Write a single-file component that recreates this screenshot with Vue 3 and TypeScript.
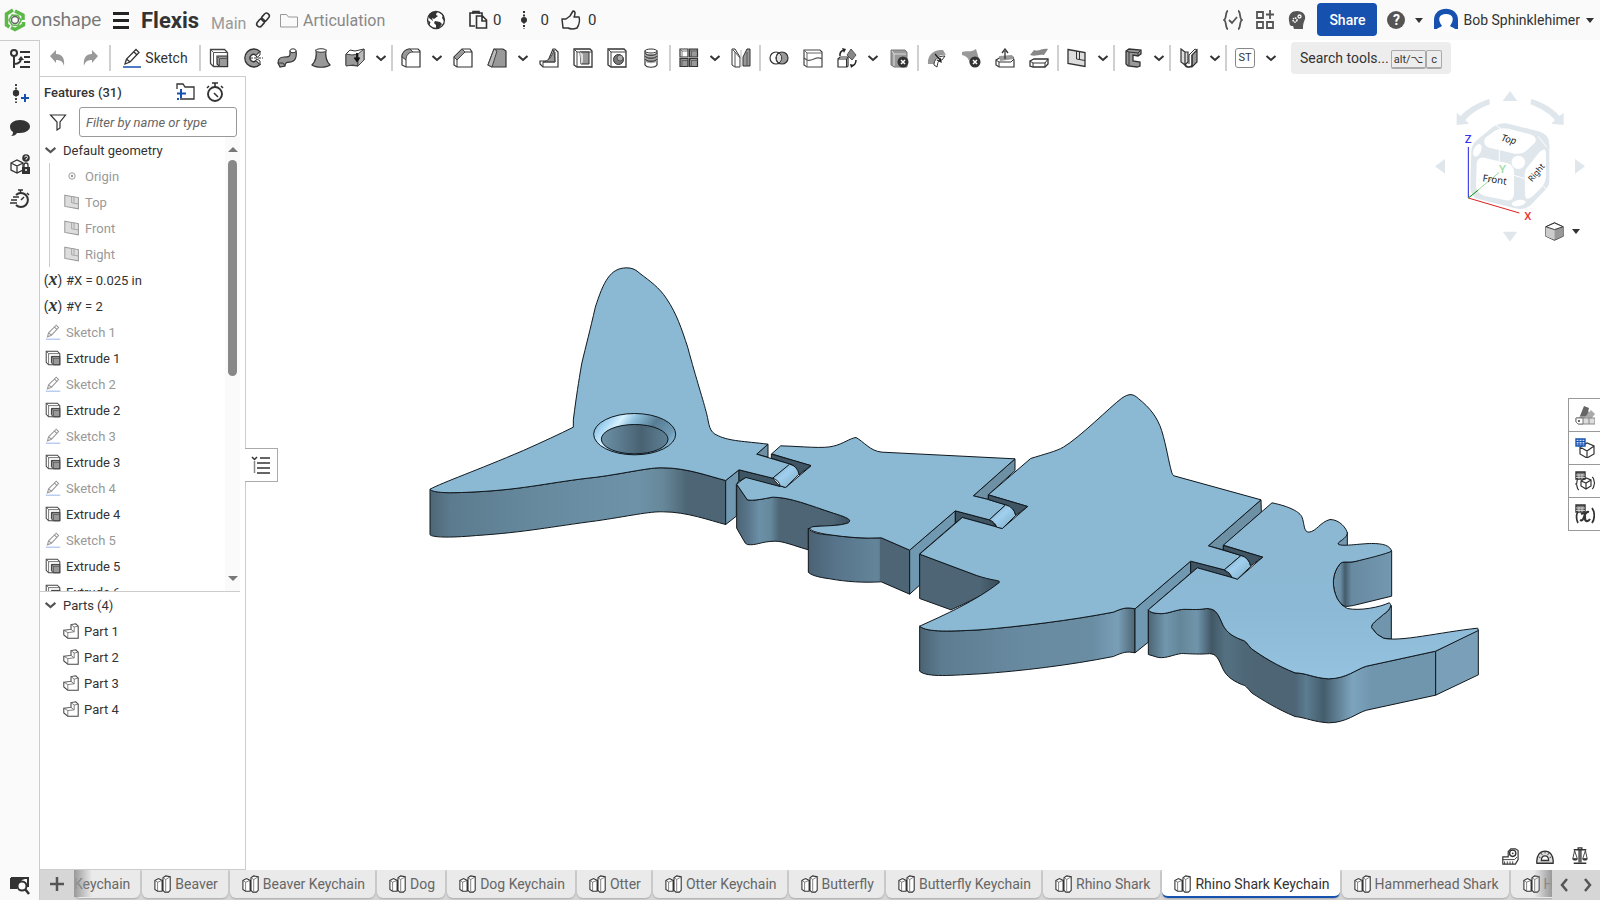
<script setup lang="ts">
import { ref } from 'vue'

interface Tool {
  icon: string
  label: string
  menu?: boolean
}

interface Feature {
  icon: string
  name: string
  muted?: boolean
}

const toolGroups: Tool[][] = [
  [
    { icon: 'extrude', label: 'Extrude' },
    { icon: 'revolve', label: 'Revolve' },
    { icon: 'sweep', label: 'Sweep' },
    { icon: 'loft', label: 'Loft' },
    { icon: 'thicken', label: 'Thicken', menu: true },
  ],
  [
    { icon: 'fillet', label: 'Fillet', menu: true },
    { icon: 'chamfer', label: 'Chamfer' },
    { icon: 'draft', label: 'Draft', menu: true },
    { icon: 'rib', label: 'Rib' },
    { icon: 'shell', label: 'Shell' },
    { icon: 'hole', label: 'Hole' },
    { icon: 'thread', label: 'External thread' },
  ],
  [
    { icon: 'pattern', label: 'Linear pattern', menu: true },
    { icon: 'mirror', label: 'Mirror' },
  ],
  [
    { icon: 'boolean', label: 'Boolean' },
    { icon: 'split', label: 'Split' },
    { icon: 'transform', label: 'Transform', menu: true },
    { icon: 'delete-part', label: 'Delete part' },
  ],
  [
    { icon: 'modify-fillet', label: 'Modify fillet' },
    { icon: 'delete-face', label: 'Delete face' },
    { icon: 'move-face', label: 'Move face' },
    { icon: 'replace-face', label: 'Replace face' },
  ],
  [{ icon: 'plane', label: 'Plane', menu: true }],
  [{ icon: 'frame', label: 'Frame', menu: true }],
  [{ icon: 'sheet', label: 'Sheet metal', menu: true }],
]

const geometry: Feature[] = [
  { icon: 'origin', name: 'Origin' },
  { icon: 'plane', name: 'Top' },
  { icon: 'plane', name: 'Front' },
  { icon: 'plane', name: 'Right' },
]

const features: Feature[] = [
  { icon: 'variable', name: '#X = 0.025 in' },
  { icon: 'variable', name: '#Y = 2' },
]
for (let n = 1; n <= 5; n++) {
  features.push({ icon: 'sketch', name: `Sketch ${n}`, muted: true })
  features.push({ icon: 'extrude', name: `Extrude ${n}` })
}
features.push({ icon: 'extrude', name: 'Extrude 6' })

const parts = ['Part 1', 'Part 2', 'Part 3', 'Part 4']
const tabs = [
  'Beaver', 'Beaver Keychain', 'Dog', 'Dog Keychain', 'Otter', 'Otter Keychain',
  'Butterfly', 'Butterfly Keychain', 'Rhino Shark', 'Rhino Shark Keychain',
  'Hammerhead Shark', 'Hammerhead Shark Keychain',
]
const activeTab = ref('Rhino Shark Keychain')
const filterText = ref('')
const rail = [
  { icon: 'tree', label: 'Feature list' },
  { icon: 'version', label: 'Versions and history' },
  { icon: 'comment', label: 'Comments' },
  { icon: 'learn', label: 'Configurations' },
  { icon: 'speed', label: 'Performance' },
]
const sideTools = [
  { icon: 'appearance', label: 'Appearances' },
  { icon: 'config-table', label: 'Configuration table' },
  { icon: 'custom-table', label: 'Custom tables' },
  { icon: 'variable-table', label: 'Variable table' },
]
const measureTools = [
  { icon: 'tape', label: 'Measure' },
  { icon: 'protractor', label: 'Analysis' },
  { icon: 'scales', label: 'Mass properties' },
]
</script>

<template>
  <div class="app">
    <svg class="defs" aria-hidden="true">
      <symbol id="i-extrude" viewBox="0 0 20 20"><path d="M1.500 1.500h14l3 3v14h-14l-3-3z" fill="#fff" stroke="#444" stroke-width="1.300" /><path d="M1.500 1.500l3 3h14M4.500 4.500v14" fill="none" stroke="#555" /><path d="M8 8h10.500v10.500h-8L8 16z" fill="#999" stroke="#333" stroke-width="1.200" /><path d="M8 8l2.500 2.500h8M10.500 10.500v8" fill="none" stroke="#555" /></symbol>
      <symbol id="i-revolve" viewBox="0 0 20 20"><path d="M17 3.500A9 9 0 1 0 17 16.500L13 12.500a3.500 3.500 0 1 1 0-5z" fill="#999" stroke="#333" stroke-width="1.300" /><path d="M17 3.500v3.500l-3 2.500-1-2zM17 16.500V13l-3-2-1 1.500z" fill="#fff" stroke="#333" /><path d="M7 10h13" stroke="#333" stroke-dasharray="3 1" /></symbol>
      <symbol id="i-sweep" viewBox="0 0 20 20"><path d="M1 15c0-4 2-6 6-6s6 0 6-3V3h6c1 6-1 10-5 11-4 .5-6 0-6 4l-5 1z" fill="#999" stroke="#333" stroke-width="1.200" /><ellipse cx="16" cy="2.800" rx="3" ry="2" fill="#fff" stroke="#333" /><path d="M1 15l5 0 2 3" fill="none" stroke="#333" /></symbol>
      <symbol id="i-loft" viewBox="0 0 20 20"><path d="M5 2C6 9 4 14 1 17c4 3 14 3 18 0-3-3-5-8-4-15z" fill="#999" stroke="#333" stroke-width="1.200" /><ellipse cx="10" cy="2.500" rx="5" ry="1.800" fill="#fff" stroke="#333" /></symbol>
      <symbol id="i-thicken" viewBox="0 0 20 20"><path d="M1 6l4-4 5 1 9-2v11l-6 6-12-1z" fill="#fff" stroke="#333" /><path d="M1 6l6 1 6-1v12l-5-1-7 1z" fill="#999" stroke="#444" /><path d="M13 6l6-5v11l-6 6z" fill="#bbb" stroke="#444" /><path d="M12 5v7M9.500 9.500L12 13l2.500-3.500" stroke="#111" stroke-width="1.800" fill="none" /></symbol>
      <symbol id="i-fillet" viewBox="0 0 20 20"><path d="M1 17V9C1 4 5 1 9 1h8l2 2v16H5z" fill="#fff" stroke="#333" stroke-width="1.200" /><path d="M1 9C1 4 5 1 9 1l3 3C8 4 5 7 5 12z" fill="#999" stroke="#444" /><path d="M5 12v7M12 4h7" stroke="#333" /></symbol>
      <symbol id="i-chamfer" viewBox="0 0 20 20"><path d="M1 17V9l8-8h8l2 3v15H4z" fill="#fff" stroke="#333" stroke-width="1.200" /><path d="M1 9l8-8 3 3-8 8z" fill="#999" stroke="#444" /><path d="M4 12v7M12 4h7" stroke="#333" /></symbol>
      <symbol id="i-draft" viewBox="0 0 20 20"><path d="M1 17L7 1h9l3 2v16H5z" fill="#999" stroke="#333" stroke-width="1.200" /><path d="M7 1l3 2-5 16-4-2z" fill="#bbb" stroke="#444" /></symbol>
      <symbol id="i-rib" viewBox="0 0 20 20"><path d="M1 13h8l5-12h2l3 3v15H4l-3-3z" fill="#fff" stroke="#333" stroke-width="1.200" /><path d="M4 14c5-1 9-5 11-12l1 12z" fill="#999" stroke="#444" /><path d="M16 4v10H4v5" fill="none" stroke="#444" /></symbol>
      <symbol id="i-shell" viewBox="0 0 20 20"><path d="M1 1h16l2 2v16H4l-3-2z" fill="#fff" stroke="#333" stroke-width="1.300" /><path d="M1 1l3 3h15M4 4v15" fill="none" stroke="#444" /><path d="M7 4h9v12H8z" fill="#999" stroke="#333" /><path d="M7 4l3 2v8l-2 2z" fill="#ddd" /></symbol>
      <symbol id="i-hole" viewBox="0 0 20 20"><path d="M1 1h16l2 2v16H4l-3-2z" fill="#fff" stroke="#333" stroke-width="1.300" /><path d="M1 1l3 3h15M4 4v15" fill="none" stroke="#444" /><circle cx="11.500" cy="11.500" r="5" fill="#777" stroke="#333" /><circle cx="13" cy="10" r="3" fill="#aaa" stroke="#555" /></symbol>
      <symbol id="i-thread" viewBox="0 0 20 20"><path d="M4 3v14c2 3 10 3 12 0V3z" fill="#fff" stroke="#333" stroke-width="1.200" /><path d="M4 5v8c2 3 10 3 12 0V5c-2 2-10 2-12 0z" fill="#aaa" /><path d="M4 5c2 3 10 3 12 0M4 8c2 3 10 3 12 0M4 11c2 3 10 3 12 0" fill="none" stroke="#444" stroke-width="1.300" /><ellipse cx="10" cy="3" rx="6" ry="2" fill="#fff" stroke="#333" /></symbol>
      <symbol id="i-pattern" viewBox="0 0 20 20"><g stroke="#333" stroke-width="1.200"><path d="M1 1h8v8H1z" fill="#fff" /><path d="M10.500 1h8v8h-8zM1 10.500h8v8H1zM10.500 10.500h8v8h-8z" fill="#999" /><path d="M1 10.500l2 2h6M3 12.500v6M10.500 10.500l2 2h6M12.500 12.500v6M10.500 1l2 2h6M12.500 3v6M1 1l2 2h6M3 3v6" fill="none" stroke="#555" stroke-width=".8" /></g></symbol>
      <symbol id="i-mirror" viewBox="0 0 20 20"><path d="M1 1h3l5 8v10H4l-3-2z" fill="#fff" stroke="#333" /><path d="M4 4v15M1 1l3 3 5 6" fill="none" stroke="#555" /><path d="M16 1h3v17h-7V9z" fill="#999" stroke="#333" /><path d="M16 4v14" stroke="#555" /><path d="M10 2v17" fill="none" stroke="#bbb" /></symbol>
      <symbol id="i-boolean" viewBox="0 0 20 20"><circle cx="7" cy="10" r="6" fill="#fff" stroke="#333" stroke-width="1.200" /><circle cx="13" cy="10" r="6" fill="#999" stroke="#333" stroke-width="1.200" /><path d="M10 5a6 6 0 0 1 0 10 6 6 0 0 1 0-10z" fill="#ddd" stroke="#333" /></symbol>
      <symbol id="i-split" viewBox="0 0 20 20"><path d="M1 2h16l2 2v15H4l-3-2z" fill="#fff" stroke="#444" stroke-width="1.200" /><path d="M1 2l3 3h15M4 5v14" fill="none" stroke="#666" /><path d="M1 10l3 2c6 2 9-5 15-1" fill="none" stroke="#555" stroke-width="1.300" /></symbol>
      <symbol id="i-transform" viewBox="0 0 20 20"><path d="M14 1l5 6-4 5-5-5z" fill="#888" stroke="#555" /><path d="M1 11l2-2h8v9l-1 1H1z" fill="#fff" stroke="#333" stroke-width="1.200" /><path d="M1 11h8.500v8M9.500 11L11 9" fill="none" stroke="#333" /><path d="M3 8c-.5-3 1-5 4-6M19 12c0 3-1 5-4 6" fill="none" stroke="#222" stroke-width="1.500" /><path d="M5 0l4 1-2 4zM13 16l1 4 3-3z" fill="#222" /></symbol>
      <symbol id="i-delete-part" viewBox="0 0 20 20"><path d="M2 2h14l2 2v15H5l-3-2z" fill="#999" stroke="#777" /><path d="M3 3l2 3h12M5 6v12" fill="none" stroke="#ddd" /><circle cx="14" cy="14" r="5.500" fill="#333" /><path d="M12 12l4 4m0-4l-4 4" stroke="#fff" stroke-width="1.500" /></symbol>
      <symbol id="i-modify-fillet" viewBox="0 0 20 20"><path d="M1 16C0 7 7 1 16 2l3 5c-6-1-10 2-12 9z" fill="#999" /><path d="M7 17c0-5 3-9 11-9l-3 4c-4 0-4 2-5 7z" fill="#fff" stroke="#333" /><path d="M8 6l6 7M10 12l4 2-1-4" stroke="#222" stroke-width="1.200" fill="none" /></symbol>
      <symbol id="i-delete-face" viewBox="0 0 20 20"><path d="M1 4c4-2 8 1 14-3l3 10c-4 0-6 2-9 5C8 11 6 8 1 7z" fill="#999" /><circle cx="14" cy="14" r="5.500" fill="#333" /><path d="M12 12l4 4m0-4l-4 4" stroke="#fff" stroke-width="1.500" /></symbol>
      <symbol id="i-move-face" viewBox="0 0 20 20"><path d="M1 12l5-3h12l1 3v7H4l-3-2z" fill="#fff" stroke="#333" stroke-width="1.200" /><path d="M4 8l13-1 2 4-14 2z" fill="#999" /><path d="M1 12l3 2h12l3-3M4 14v5" fill="none" stroke="#333" /><path d="M10 11V3M7 5l3-4 3 4" stroke="#333" stroke-width="1.300" fill="none" /></symbol>
      <symbol id="i-replace-face" viewBox="0 0 20 20"><path d="M5 2c5 2 8-2 14-1l-4 6C9 6 7 9 1 7z" fill="#888" /><path d="M1 13l4-2h14v5l-3 3H4l-3-1z" fill="#fff" stroke="#333" stroke-width="1.300" /><path d="M1 13l3 2h12l3-4M16 15v4M4 15v4" fill="none" stroke="#333" /></symbol>
      <symbol id="i-plane" viewBox="0 0 20 20"><path d="M1 1.500l17 3v14l-17-3z" fill="#ddd" stroke="currentColor" stroke-width="1.300" /><path d="M9.500 3v8l8.500 1.500M12.500 3.500v7.500" fill="none" stroke="currentColor" /></symbol>
      <symbol id="i-frame" viewBox="0 0 20 20"><path d="M3 3l3-2 12 1v4l-3 2-5-1v6l7 1v4l-3 1-9-1-2-2z" fill="#999" stroke="#333" stroke-width="1.300" /><path d="M3 3l3 1v14M6 4l9 1 3-3M15 5v3" fill="none" stroke="#333" /></symbol>
      <symbol id="i-sheet" viewBox="0 0 20 20"><path d="M2 1l4 3v13l-4-3zM6 4h3v10l-3 3" fill="#ddd" stroke="#333" stroke-width="1.200" /><path d="M6 17c1 3 6 3 7 0V7l5-5v12l-5 5H9z" fill="#999" stroke="#333" stroke-width="1.200" /><path d="M13 7v11l-4 1M10 7l6-6 2 1M10 7v9" fill="none" stroke="#333" /></symbol>
      <symbol id="i-sketch" viewBox="0 0 20 20"><path d="M3 16l1.500-5L14 1.500l3 3L8 14zM4.500 11L8 14M12 4l3 3" fill="none" stroke="currentColor" stroke-width="1.300" /><path d="M1 19h18" stroke="var(--line, #1651b0)" stroke-width="1.500" /></symbol>
      <symbol id="i-origin" viewBox="0 0 20 20"><circle cx="10" cy="10" r="4" fill="none" stroke="currentColor" stroke-width="1.200" /><circle cx="10" cy="10" r="1.500" fill="currentColor" /></symbol>
      <symbol id="i-part" viewBox="0 0 20 20"><path d="M1 9l9-1V2l6-1 3 3v15H6l-5-4z" fill="#fff" stroke="#444" stroke-width="1.300" /><path d="M1 9l5 3 8-1V5l-4-3M14 5l5-1M6 12v7M14 11l-4-3" fill="none" stroke="#666" /></symbol>
      <symbol id="i-tab" viewBox="0 0 20 20"><path d="M1 6l4-2 4 2v12H4l-3-2zM10 3l3-2 5 1v15l-2 2h-4l-2-2z" fill="#fff" stroke="#333" stroke-width="1.200" /><path d="M1 6l3 2 5-2M4 8v10M10 3l3 2 5-3M13 5v13" fill="none" stroke="#555" stroke-width=".8" /></symbol>
      <symbol id="i-chevron" viewBox="0 0 12 12"><path d="M1.500 4L6 8l4.500-4" fill="none" stroke="currentColor" stroke-width="2" /></symbol>
      <symbol id="i-undo" viewBox="0 0 20 20"><path d="M3 8l6-6v4c6 0 9 4 8 12-1-4-3-6-8-6v3z" fill="#999" /></symbol>
      <symbol id="i-tree" viewBox="0 0 20 20"><circle cx="4" cy="4" r="3" fill="none" stroke="#333" stroke-width="2" /><path d="M4 7v12M4 15c5 0 7-2 7-6" fill="none" stroke="#333" stroke-width="2" /><path d="M8 11l3-4 3 4z" fill="#333" /><path d="M10 3h10M14 8h6M14 13h6M10 18h10" stroke="#333" stroke-width="2" /></symbol>
      <symbol id="i-version" viewBox="0 0 20 20"><circle cx="6" cy="9" r="3.200" fill="#333" /><path d="M6 0v19" stroke="#333" stroke-width="1.800" stroke-dasharray="2 1.500" /><path d="M15 10v8M11 14h8" stroke="#1651b0" stroke-width="2" /></symbol>
      <symbol id="i-comment" viewBox="0 0 20 20"><path d="M10 1c6 0 10 3 10 6.500S16 14 10 14H7c-1 2-3 3-6 3 2-1 2-3 2-4-2-1-3-3-3-5.500C0 4 4 1 10 1z" fill="#333" /></symbol>
      <symbol id="i-learn" viewBox="0 0 20 20"><path d="M1 9l6-3 6 3v7l-6 3-6-3zM1 9l6 3 6-3M7 12v7" fill="none" stroke="#333" stroke-width="1.300" /><circle cx="16" cy="4" r="3.800" fill="#333" /><path d="M14.700 3.300a1.400 1.400 0 1 1 1.300 1.500v.9" fill="none" stroke="#fff" /><path d="M12 13h8v7h-8z" fill="#333" /><path d="M14 13v-2a2 2 0 0 1 4 0v2" fill="none" stroke="#333" stroke-width="1.300" /><circle cx="16" cy="16" r="1" fill="#fff" /></symbol>
      <symbol id="i-speed" viewBox="0 0 20 20"><path d="M6 6a7 7 0 1 1 0 10" fill="none" stroke="#333" stroke-width="2" /><path d="M8 1h5M10.500 1v3M17 4l2 2M11 11l3-3M3 8h6M1 11h6M0 14h7" stroke="#333" stroke-width="1.500" /></symbol>
      <symbol id="i-clock" viewBox="0 0 20 20"><circle cx="10" cy="12" r="7" fill="none" stroke="#333" stroke-width="1.900" /><path d="M7 1h6M10 1v4M16 4l2 2M4 4L2 6M13 15l-4-4" stroke="#333" stroke-width="1.600" /></symbol>
      <symbol id="i-folder-add" viewBox="0 0 20 20"><path d="M5 17h14V5h-9L8 2H2v5" fill="none" stroke="#333" stroke-width="1.300" /><path d="M2 17h2M6 7v9M2 11.500h9" stroke="#1651b0" stroke-width="2" /></symbol>
      <symbol id="i-find" viewBox="0 0 20 20"><path d="M1 3h17v9M1 3v10h6" fill="none" stroke="#333" stroke-width="2" /><path d="M1 3h17l-6 2-6 8H1z" fill="#333" /><circle cx="12" cy="11" r="4.500" fill="#fafafa" stroke="#333" stroke-width="2" /><path d="M15 14l4 5" stroke="#333" stroke-width="2.500" /></symbol>
      <symbol id="i-cube" viewBox="0 0 20 20"><path d="M1 5l9-4 9 4v10l-9 4-9-4z" fill="#ddd" stroke="#333" stroke-width="1.200" /><path d="M1 5l9 3v11l-9-4z" fill="#ccc" /><path d="M10 8l9-3v10l-9 4z" fill="#999" /><path d="M1 5l9-4 9 4-9 3z" fill="#fff" stroke="#333" /></symbol>
      <symbol id="i-appearance" viewBox="0 0 20 20"><path d="M2 14L12 5l4 4-9 6z" fill="#999" /><path d="M5 11L9 1l5 2-2 8z" fill="#666" /><path d="M10 12l6-7 4 4-4 5z" fill="#aaa" /><path d="M1 13h19v6H3l-2-2z" fill="#ddd" stroke="#888" /><path d="M1 13h7v6H3l-2-2z" fill="#fff" stroke="#777" /><path d="M14 13v6" stroke="#888" /><circle cx="4" cy="16" r="1" fill="#333" /></symbol>
      <symbol id="i-config-table" viewBox="0 0 20 20"><path d="M5 9l7-4 7 3v8l-7 4-7-4zM5 9l7 4 7-5M12 13v7" fill="#fff" stroke="#333" stroke-width="1.200" /><path d="M1 1h9v7H1z" fill="#cce1ff" stroke="#1651b0" stroke-width="1.400" /><path d="M1 3.500h9M1 6h9M4 1v7M7 1v7" stroke="#1651b0" /></symbol>
      <symbol id="i-custom-table" viewBox="0 0 20 20"><path d="M6 10l5-3 5 2v6l-5 3-5-3zM6 10l5 2 5-3M11 12v6M3 8C1 9 3 12 1 13c2 1 0 5 3 6M17 6c3 1 1 5 3 6-2 1 0 5-3 6" fill="none" stroke="#333" stroke-width="1.200" /><path d="M1 1h9v7H1z" fill="#777" stroke="#333" stroke-width="1.400" /><path d="M1 4h9M1 6.500h9M4 3v5M7 3v5" stroke="#ddd" stroke-width=".8" /></symbol>
      <symbol id="i-variable-table" viewBox="0 0 20 20"><path d="M3 8C1 10 1 15 3 19M17 4c3 4 3 11 0 15" fill="none" stroke="#333" stroke-width="1.700" /><path d="M6 10c4-2 4 0 4 4s3 4 5 1M14 8c-3-1-4 2-5 5s-2 4-4 3" fill="none" stroke="#333" stroke-width="2.200" /><path d="M1 1h9v7H1z" fill="#777" stroke="#333" stroke-width="1.400" /><path d="M1 4h9M1 6.500h9M4 3v5M7 3v5" stroke="#ddd" stroke-width=".8" /></symbol>
      <symbol id="i-tape" viewBox="0 0 20 20"><path d="M2 19v-8h6V5l3-3h5l3 2v10l-3 5z" fill="#fff" stroke="#333" stroke-width="1.300" /><circle cx="13" cy="7" r="3.500" fill="#fff" stroke="#333" stroke-width="1.500" /><circle cx="13" cy="7" r="1" fill="#333" /><path d="M2 14h13l3-3M4 19v-3M7 19v-3M10 19v-3M13 19v-3" fill="none" stroke="#333" /></symbol>
      <symbol id="i-protractor" viewBox="0 0 20 20"><path d="M1 18C-1 0 21 0 19 18z" fill="#ddd" stroke="#333" stroke-width="1.500" /><path d="M6 15c0-7 8-7 8 0z" fill="#fff" stroke="#333" stroke-width="1.400" /><path d="M3 11l2 1M6 7l1 2M10 5v2M14 7l-1 2M17 11l-2 1" stroke="#333" /></symbol>
      <symbol id="i-scales" viewBox="0 0 20 20"><path d="M3 3h14M9 3v14M11 3v14M8 3V1h4v2M3 18h14" fill="none" stroke="#333" stroke-width="1.500" /><path d="M4 4l-2 9h5zM16 4l-3 9h5z" fill="none" stroke="#333" /><path d="M1 13h7l-2 2H3zM12 13h7l-2 2h-3z" fill="#333" /></symbol>
    </svg>

    <header class="header">
      <svg class="logo" viewBox="0 0 22 24"><g fill="none" stroke="#5cb848" stroke-width="3.500"><path d="M9 2L2.500 6v11l3 2" /><path d="M11 3l8 4v5" /><path d="M19.500 14v3L11 21.500l-4-2" /></g><path d="M8 7l6 .5 3 5-3 5-6-.5-3-5z" fill="none" stroke="#5cb848" stroke-width="1.500" /><circle cx="11" cy="12" r="3.500" fill="none" stroke="#666" stroke-width="1.400" /></svg>
      <span class="brand">onshape</span>
      <button class="plain burger" aria-label="Menu"><i></i><i></i><i></i></button>
      <h1>Flexis</h1>
      <span class="branch">Main</span>
      <button class="plain link" aria-label="Copy link"><svg width="16" height="16" viewBox="0 0 20 20"><g fill="none" stroke="#333" stroke-width="2"><rect x="9.500" y="1" width="7" height="11" rx="3.500" transform="rotate(40 13 6.500)" /><rect x="3.500" y="8" width="7" height="11" rx="3.500" transform="rotate(40 7 13.500)" /></g></svg></button>
      <a class="crumb" href="#articulation"><svg width="18" height="15" viewBox="0 0 18 15"><path d="M.5 1.500h6l2 2.500h9v10H.5z" fill="none" stroke="#999" /></svg>Articulation</a>
      <button class="plain globe" aria-label="Public document"><svg width="20" height="20" viewBox="0 0 20 20"><circle cx="10" cy="10" r="8.500" fill="#fff" stroke="#333" stroke-width="1.300" /><path d="M3 5c2-3 5-4 8-3l-1 3 2 1-4 3-2-1 1 3-4-3zM13 2l4 3-1 3 2 3V7c0-2-3-5-5-5zM9 11l5 1 2 2-4 5-2-1v-3l-2-2zM1.500 10l3 2-1 3z" fill="#333" /></svg></button>
      <span class="stat copies"><svg width="20" height="20" viewBox="0 0 20 20"><path d="M7 16H2V3h12v3M5 4V1.500h6V4" fill="none" stroke="#333" stroke-width="1.600" /><path d="M8.500 6h6l4 4v8h-10zM14 6v5h5" fill="none" stroke="#333" stroke-width="1.600" /></svg>0</span>
      <span class="stat versions"><svg width="12" height="20" viewBox="0 0 12 20"><circle cx="6" cy="10" r="3" fill="#333" /><path d="M6 1v18" stroke="#333" stroke-width="2" stroke-dasharray="2 1.500" /></svg>0</span>
      <span class="stat likes"><svg width="20" height="20" viewBox="0 0 20 20"><path d="M1 9h4l4-3 3-5c3 0 2 4 1 6h5c1 3 0 8-2 11-3 1-7 1-9 0H2z" fill="none" stroke="#333" stroke-width="1.500" stroke-linejoin="round" /></svg>0</span>
      <div class="header-right">
        <button class="plain hicon" aria-label="FeatureScript"><svg width="20" height="20" viewBox="0 0 20 20"><path d="M5 1C2 1 4 9 1 10c3 1 1 9 4 9M15 1c3 0 1 8 4 9-3 1-1 9-4 9M6 10l3 3 5-6" fill="none" stroke="#555" stroke-width="1.800" /></svg></button>
        <button class="plain hicon" aria-label="Apps"><svg width="20" height="20" viewBox="0 0 20 20"><path d="M2 2h6v6H2zM2 12h6v6H2zM12 12h6v6h-6zM15 0v9M11 4.500h8" fill="none" stroke="#555" stroke-width="1.800" /></svg></button>
        <button class="plain hicon" aria-label="Learning"><svg width="20" height="20" viewBox="0 0 20 20"><path d="M10 1c6 0 9 4 8 8-1 3-2 4-2 10H7l-1-3c-4 0-3-2-4-5C1 4 5 1 10 1z" fill="#555" /><circle cx="8" cy="10" r="2" fill="none" stroke="#fff" stroke-width="1.500" stroke-dasharray="1.500 .6" /><circle cx="12.500" cy="6.500" r="1.500" fill="none" stroke="#fff" stroke-width="1.300" /></svg></button>
        <button class="share">Share</button>
        <button class="plain help" aria-label="Help"><span>?</span><i class="caret"></i></button>
        <button class="plain user"><svg width="26" height="24" viewBox="0 0 26 24"><path d="M1 21V12C1-3 25-3 25 12v9z" fill="#1651b0" /><path d="M3 24c0-4 3-4 6-6-5-7-3-12 4-12s9 5 4 12c3 2 6 2 6 6z" fill="#fff" /></svg>Bob Sphinklehimer<i class="caret"></i></button>
      </div>
    </header>

    <nav class="rail">
      <button v-for="r in rail" :key="r.icon" class="plain" :aria-label="r.label"><svg><use :href="'#i-' + r.icon" /></svg></button>
      <button class="plain find" aria-label="Search tabs"><svg><use href="#i-find" /></svg></button>
    </nav>

    <div class="toolbar">
      <button class="tool plain" aria-label="Undo"><svg><use href="#i-undo" /></svg></button>
      <button class="tool plain redo" aria-label="Redo"><svg><use href="#i-undo" /></svg></button>
      <i class="sep"></i>
      <button class="plain sketch"><svg><use href="#i-sketch" /></svg>Sketch</button>
      <template v-for="(group, g) in toolGroups" :key="g">
        <i class="sep"></i>
        <template v-for="t in group" :key="t.icon">
          <button class="tool plain" :aria-label="t.label"><svg><use :href="'#i-' + t.icon" /></svg></button>
          <button v-if="t.menu" class="plain more" :aria-label="t.label + ' menu'"><svg><use href="#i-chevron" /></svg></button>
        </template>
      </template>
      <i class="sep"></i>
      <button class="tool plain" aria-label="Custom features"><span class="st">ST</span></button>
      <button class="plain more" aria-label="Custom features menu"><svg><use href="#i-chevron" /></svg></button>
      <button class="search">Search tools... <kbd>alt/⌥</kbd><kbd>c</kbd></button>
    </div>

    <main class="work">
      <aside class="panel">
        <div class="panel-head">
          <h2>Features (31)</h2>
          <button class="plain" aria-label="New folder"><svg><use href="#i-folder-add" /></svg></button>
          <button class="plain" aria-label="Regeneration times"><svg><use href="#i-clock" /></svg></button>
        </div>
        <div class="filter">
          <svg width="18" height="18" viewBox="0 0 18 18"><path d="M1.500 2h15L11 9v6l-3 2V9z" fill="none" stroke="#333" stroke-width="1.200" /></svg>
          <input v-model="filterText" type="text" aria-label="Filter features" placeholder="Filter by name or type" />
        </div>
        <div class="tree">
          <div class="tree-list">
            <button class="plain row head"><svg><use href="#i-chevron" /></svg>Default geometry</button>
            <ul class="geometry">
              <li v-for="f in geometry" :key="f.name" class="row muted"><svg><use :href="'#i-' + f.icon" /></svg>{{ f.name }}</li>
            </ul>
            <ul>
              <li v-for="f in features" :key="f.name" class="row" :class="{ muted: f.muted }">
                <span v-if="f.icon === 'variable'" class="var">(<em>x</em>)</span>
                <svg v-else><use :href="'#i-' + f.icon" /></svg>{{ f.name }}
              </li>
            </ul>
          </div>
          <div class="scroll"><i class="up"></i><i class="thumb"></i><i class="down"></i></div>
        </div>
        <div class="parts">
          <button class="plain row head"><svg><use href="#i-chevron" /></svg>Parts (4)</button>
          <ul><li v-for="p in parts" :key="p" class="row part"><svg><use href="#i-part" /></svg>{{ p }}</li></ul>
        </div>
      </aside>

      <section class="canvas">
        <svg class="model" viewBox="738 228 4062 2379" role="img" aria-label="Articulated shark model">
          <defs>
            <linearGradient id="g1"><stop offset="0" stop-color="#4d6676" /><stop offset=".07" stop-color="#5c7b8e" /><stop offset=".35" stop-color="#66899e" /><stop offset=".7" stop-color="#6e93a9" /><stop offset=".79" stop-color="#668799" /><stop offset=".87" stop-color="#4d6575" /><stop offset="1" stop-color="#4d6575" /></linearGradient>
            <linearGradient id="g2"><stop offset="0" stop-color="#4d6575" /><stop offset=".1" stop-color="#58758a" /><stop offset=".2" stop-color="#6b90a7" /><stop offset=".3" stop-color="#66889d" /><stop offset=".38" stop-color="#4d6575" /><stop offset=".85" stop-color="#4d6575" /><stop offset="1" stop-color="#3c505e" /></linearGradient>
            <linearGradient id="g3"><stop offset="0" stop-color="#4b6272" /><stop offset=".35" stop-color="#56738a" /><stop offset=".95" stop-color="#63859a" /><stop offset="1" stop-color="#587587" /></linearGradient>
            <linearGradient id="g4"><stop offset="0" stop-color="#4b6373" /><stop offset=".1" stop-color="#5d7c90" /><stop offset=".5" stop-color="#698ba2" /><stop offset=".8" stop-color="#698da3" /><stop offset=".92" stop-color="#799fb8" /><stop offset=".97" stop-color="#5d7b8d" /><stop offset="1" stop-color="#4d6575" /></linearGradient>
            <linearGradient id="g5"><stop offset="0" stop-color="#4d6575" /><stop offset=".06" stop-color="#7197ae" /><stop offset=".11" stop-color="#648699" /><stop offset=".17" stop-color="#7095ab" /><stop offset=".22" stop-color="#425866" /><stop offset=".27" stop-color="#547182" /><stop offset=".33" stop-color="#4f6878" /><stop offset=".38" stop-color="#4d6575" /><stop offset=".51" stop-color="#4d6575" /><stop offset=".55" stop-color="#5c7c90" /><stop offset=".61" stop-color="#445d6c" /><stop offset=".71" stop-color="#7ca4bd" /><stop offset=".78" stop-color="#7096ae" /><stop offset="1" stop-color="#7096ae" /></linearGradient>
            <linearGradient id="g6"><stop offset="0" stop-color="#7095ac" /><stop offset=".12" stop-color="#6b8ea5" /><stop offset=".2" stop-color="#445c6b" /><stop offset=".31" stop-color="#688aa1" /><stop offset="1" stop-color="#7398b0" /></linearGradient>
            <linearGradient id="g7"><stop offset="0" stop-color="#4d6575" /><stop offset=".75" stop-color="#4d6575" /><stop offset="1" stop-color="#394d5a" /></linearGradient>
            <linearGradient id="pin" x1="0" y1="0" x2="1" y2="1"><stop offset="0" stop-color="#77a3bf" /><stop offset=".45" stop-color="#a0d0ee" /><stop offset="1" stop-color="#7ca9c4" /></linearGradient>
            <linearGradient id="rim" x1="0" y1=".2" x2="1" y2=".6"><stop offset="0" stop-color="#75a1be" /><stop offset=".12" stop-color="#9ed0f0" /><stop offset=".27" stop-color="#d6f2ff" /><stop offset=".4" stop-color="#91c2df" /><stop offset=".65" stop-color="#577d93" /><stop offset=".9" stop-color="#6d99b4" /><stop offset="1" stop-color="#8ab9d5" /></linearGradient>
            <linearGradient id="bore"><stop offset="0" stop-color="#6d91a8" /><stop offset=".6" stop-color="#486272" /><stop offset="1" stop-color="#5f8195" /></linearGradient>
            <linearGradient id="head-top" x1="0" y1="0" x2="0" y2="1"><stop offset="0" stop-color="#8bb7d2" /><stop offset=".6" stop-color="#8cb9d5" /><stop offset="1" stop-color="#94c2df" /></linearGradient>
          </defs>

          <!-- body segment, tail side -->
          <g class="solid" transform="translate(2160 1140)">
            <path fill="url(#g2)" d="M50 311L82 358C100 362 130 355 158 350C210 350 270 375 340 398C380 410 398 420 385 427C360 436 330 435 285 438L265 445V508C220 495 190 482 165 482C120 483 110 496 82 492L76 488L50 443Z" />
            <path fill="url(#g3)" d="M265 443C270 455 300 463 330 463C380 470 430 475 484 472V604C430 607 380 604 330 595C290 590 270 582 265 575Z" />
            <path fill="#4d6575" stroke="none" d="M482 472L569 509V641L482 604Z" />
            <path fill="none" d="M484 472L569 509V641L484 604" />
            <path fill="#7098b1" d="M569 509L706 391V427L599 520V614L569 641Z" />
            <path fill="#6d90a5" d="M885 235L760 346L805 357V343L885 270Z" />
            <path fill="#3f5563" d="M706 391L808 418L832 440L727 411L706 427Z" />
            <path fill="#8bb8d3" d="M155 220L182 196C250 198 310 205 340 197C370 190 390 173 408 171C430 182 450 212 486 215L885 235L760 346L805 357L857 373L808 418L706 391L569 509L484 472C430 475 380 470 330 463C270 455 255 440 285 438C330 435 360 436 385 427C398 418 380 410 340 398C270 375 210 350 158 350C130 355 100 362 82 358L50 311L78 289L197 321L273 256Z" />
          </g>

          <!-- tail segment -->
          <g class="solid" transform="translate(1230 750)">
            <path fill="url(#g1)" d="M60 716C70 727 110 729 200 724C350 716 420 695 560 680C650 668 720 650 760 652C830 652 900 678 947 690V822C900 810 830 784 760 784C720 782 650 798 560 811C420 829 350 845 200 855C110 863 68 860 60 853Z" />
            <path fill="#7098b1" d="M947 690L987 658V690L979 702V797L947 822Z" />
            <path fill="#3f5563" d="M987 658L1088 683L1110 708L1008 681L987 692Z" />
            <path fill="#6d90a5" d="M1074 581L1040 611L1074 620Z" />
            <path fill="#3f5563" d="M1084 611L1203 645L1167 673Q1160 645 1139 641L1084 623Z" />
            <path fill="#8bb8d3" d="M60 716C100 695 200 660 340 600Q430 560 490 530V508C500 430 505 400 515 340C528 285 540 240 556 170C580 95 600 52 650 52C668 52 678 58 690 69C720 92 747 110 770 145C800 190 815 235 833 290C860 390 880 450 890 490C898 520 895 545 925 556C960 572 1000 572 1074 581L1040 611L1144 642L1088 683L987 658L947 690C900 678 830 652 760 652C720 650 650 668 560 680C420 695 350 716 200 724C110 729 68 727 60 716Z" />
            <path fill="url(#pin)" d="M1139 641Q1162 647 1167 671L1127 711L1110 706Q1108 690 1088 683Z" />
            <ellipse cx="674" cy="551" rx="123" ry="62" fill="url(#rim)" />
            <ellipse cx="674" cy="566" rx="100" ry="44" fill="url(#bore)" />
          </g>

          <!-- fin segment -->
          <g class="solid" transform="translate(2160 1140)">
            <path fill="url(#g7)" d="M599 521L770 585L838 600Q845 620 693 688L599 654Z" />
            <path fill="url(#g4)" d="M599 737C620 757 700 752 780 748C900 738 1050 720 1180 695C1210 682 1220 680 1245 685V817C1220 812 1210 815 1180 828C1050 854 900 872 780 880C700 884 620 892 599 872Z" />
            <path fill="#7098b1" d="M1245 685L1412 542V578L1285 688V785L1245 817Z" />
            <path fill="#6d90a5" d="M1623 358L1465 496L1510 508V495L1624 395Z" />
            <path fill="#3f5563" d="M1412 542L1513 568L1538 592L1432 562L1412 578Z" />
            <path fill="#8bb8d3" d="M805 343L932 234C970 222 1010 212 1030 200C1080 170 1170 80 1204 54C1228 37 1240 40 1255 54C1290 82 1312 110 1325 150C1340 200 1345 240 1355 275Q1357 284 1362 286L1623 358L1465 496L1563 525L1513 568L1412 542L1245 685C1220 680 1210 682 1180 695C1050 720 900 738 780 748C700 752 620 757 599 737C670 705 770 660 838 606C842 598 820 602 770 585L599 521L727 411L847 444L923 378Z" />
            <path fill="#3f5563" d="M805 343L923 378L887 405Q880 378 857 373L805 357Z" />
            <path fill="url(#pin)" d="M857 373Q882 380 887 405L847 444L830 440Q826 425 808 418Z" />
          </g>

          <!-- head segment -->
          <g class="solid" transform="translate(3300 1140)">
            <path fill="#7398b0" d="M742 456V495L722 497L714 488Z" />
            <path fill="#7095ac" d="M874 675V776L850 773Q830 765 815 742C812 730 830 720 850 702Q870 690 874 675Z" />
            <path fill="url(#g5)" d="M145 688C150 696 160 698 175 699C200 702 220 690 245 687C260 685 290 690 320 684C345 685 352 695 365 725C375 750 390 765 425 778C440 782 440 790 455 805C490 830 530 855 585 877C620 878 640 892 685 895C740 895 770 865 800 857L1007 812V944L800 989C770 997 740 1027 685 1027C640 1024 620 1012 585 1008C530 985 490 960 455 937C440 920 438 915 425 912C390 897 375 882 365 857C352 827 345 817 320 820C290 822 260 819 245 819C220 822 200 834 175 831L145 822Z" />
            <path fill="#7a9fb8" d="M1007 812L1135 748V883L1007 944Z" />
            <path fill="url(#g6)" d="M720 550C730 540 740 548 765 543L875 512V647L760 675L740 678Q725 678 712 655C695 620 695 580 720 550Z" />
            <path fill="url(#head-top)" d="M370 494L516 367C570 378 600 395 606 410C614 430 610 455 627 455C650 452 660 425 690 417C720 417 740 445 742 458C740 475 715 482 714 490C720 500 780 489 815 489C850 489 870 495 875 512C860 520 800 535 765 543C740 548 730 540 720 550C695 580 695 620 712 655Q725 678 742 684C780 692 840 680 867 667C878 670 870 690 850 702C830 720 812 730 815 742Q830 765 850 773C900 785 1020 755 1133 743L1135 750L1007 812L800 857C770 865 740 895 685 895C640 892 620 878 585 877C530 855 490 830 455 805C440 790 440 782 425 778C390 765 375 750 365 725C352 695 345 685 320 684C290 690 260 685 245 687C220 690 200 702 175 699C160 698 150 696 145 688L292 562L413 596L488 530Z" />
            <path fill="#3f5563" d="M370 495L488 530L452 556Q445 530 423 525L370 508Z" />
            <path fill="url(#pin)" d="M423 525Q447 532 452 558L412 596L397 591Q390 575 373 568Z" />
          </g>
        </svg>

        <svg class="cube" viewBox="90 50 480 480" role="img" aria-label="View orientation">
          <g fill="#dfe7ed">
            <path d="M330 62l22 30h-44zM330 514l22-30h-44zM105 288l30-22v44zM555 288l-30-22v44z" />
            <path d="M268 86C230 98 202 115 182 137L170 127V164L207 160L196 149C215 128 238 114 270 102ZM394 86C432 98 460 115 478 137L491 127V164L454 160L465 149C446 128 422 114 391 102Z" />
            <path d="M214 240Q216 220 232 208L278 170Q300 156 325 160L420 184Q448 194 448 222V335Q447 348 436 358L392 405Q372 420 345 414L235 386Q212 380 211 352Z" />
          </g>
          <g fill="#fff"><path d="M256 202L284 182Q300 170 325 175L390 192Q415 202 404 218L378 242Q366 252 345 250L268 232Q245 222 256 202Z" /><path d="M230 280Q232 260 252 262L320 278Q342 284 342 306V370Q340 394 318 390L255 377Q230 370 228 348Z" /><path d="M374 310Q376 294 390 281L418 246Q438 226 438 252V320Q437 336 426 350L398 378Q375 396 375 370Z" /><circle cx="355" cy="276" r="20" /><ellipse cx="232" cy="240" rx="11" ry="20" transform="rotate(24 232 240)" /><ellipse cx="356" cy="398" rx="21" ry="9" transform="rotate(-10 356 398)" /></g>
          <path d="M298 236V272M342 315L374 325M415 198L440 230M282 160L308 180M430 348L445 362" stroke="#fff" stroke-width="3" fill="none" />
          <g fill="none" stroke-width="3"><path d="M205 230V383" stroke="#2020dd" /><path d="M205 383L358 428" stroke="#dd2020" /><path d="M205 383L298 306" stroke="#9edc9e" /><path d="M205 383L235 359" stroke="#159815" /></g>
          <g class="axis"><text x="194" y="219" fill="#3333ee">Z</text><text x="373" y="450" fill="#e33">X</text><text x="297" y="307" fill="#a0dca4">Y</text></g>
          <g class="face"><text x="302" y="211" transform="rotate(14 302 211)" font-style="italic">Top</text><text x="247" y="333" transform="rotate(8 247 333)">Front</text><text class="right" x="396" y="336" transform="rotate(-50 396 336)">Right</text></g>
        </svg>
        <button class="plain shading" aria-label="View options"><svg><use href="#i-cube" /></svg><i class="caret"></i></button>
        <button class="plain flyout" aria-label="Toggle feature list"><svg width="20" height="20" viewBox="0 0 20 20"><path d="M1 2l2.500 2.500L6 2" fill="none" stroke="#333" stroke-width="1.500" /><path d="M3.500 6v12" stroke="#888" stroke-width="1.500" /><path d="M9 3h10M6 8h13M6 13h13M6 18h13" stroke="#333" stroke-width="1.300" /></svg></button>
        <div class="side-tools"><button v-for="s in sideTools" :key="s.icon" class="plain" :aria-label="s.label"><svg><use :href="'#i-' + s.icon" /></svg></button></div>
        <div class="measure"><button v-for="m in measureTools" :key="m.icon" class="plain" :aria-label="m.label"><svg><use :href="'#i-' + m.icon" /></svg></button></div>
      </section>
    </main>

    <footer class="tabs">
      <button class="plain add" aria-label="Add tab"><svg width="16" height="16" viewBox="0 0 16 16"><path d="M8 1v14M1 8h14" stroke="#555" stroke-width="2.500" /></svg></button>
      <div class="strip">
        <button class="tab first">Keychain</button>
        <button v-for="t in tabs" :key="t" class="tab" :class="{ active: t === activeTab }" @click="activeTab = t"><svg><use href="#i-tab" /></svg>{{ t }}</button>
      </div>
      <button class="plain nav" aria-label="Previous tabs"><svg viewBox="0 0 10 16"><path d="M8 2L3 8l5 6" fill="none" stroke="#555" stroke-width="2.500" /></svg></button>
      <button class="plain nav" aria-label="Next tabs"><svg viewBox="0 0 10 16"><path d="M2 2l5 6-5 6" fill="none" stroke="#555" stroke-width="2.500" /></svg></button>
    </footer>
  </div>
</template>

<style>
body { margin: 0; background: #fff; }
</style>

<style scoped>
.app { display: grid; grid-template: 40px 36px minmax(0, 1fr) 30px / 40px minmax(0, 1fr); height: 100vh; overflow: hidden; font: 14px Roboto, sans-serif; color: #333; }
.app * { box-sizing: border-box; }
.defs { position: absolute; width: 0; height: 0; }
button { font: inherit; color: inherit; cursor: pointer; }
.plain { border: 0; padding: 0; background: none; display: flex; align-items: center; justify-content: center; }
ul { list-style: none; margin: 0; padding: 0; }
.caret { border: 4px solid transparent; border-top: 5px solid #333; border-bottom: 0; }

.header { grid-column: 1 / -1; background: #fafafa; display: flex; align-items: center; white-space: nowrap; }
.logo { width: 22px; height: 24px; margin-left: 4px; }
.brand { font: 19px Lato, sans-serif; color: #777; width: 74px; margin: 0 0 3px 5px; }
.burger { flex-direction: column; gap: 4px; width: 16px; margin-left: 8px; }
.burger i { width: 16px; height: 3px; background: #222; }
h1 { font-size: 22px; line-height: 24px; font-weight: 700; margin: 2px 0 0 12px; width: 61px; }
.branch { font-size: 16px; color: #999; margin: 6px 0 0 9px; width: 37px; }
.link { margin-left: 7px; }
.crumb { display: flex; align-items: center; gap: 5px; color: #888; text-decoration: none; font-size: 16px; margin-left: 9px; width: 138px; }
.globe { margin-left: 8px; }
.stat { display: flex; align-items: center; font-size: 15px; }
.copies { gap: 5px; margin-left: 22px; }
.versions { gap: 10px; margin-left: 17px; }
.likes { gap: 7px; margin-left: 12px; }
.header-right { display: flex; align-items: center; margin-left: auto; padding-right: 6px; }
.hicon { width: 32px; }
.share { border: 0; border-radius: 4px; background: #1651b0; color: #fff; width: 60px; height: 33px; font-weight: 500; margin: 0 10px 1px 4px; }
.help { gap: 10px; }
.help span { width: 18px; height: 18px; border-radius: 9px; background: #555; color: #fff; font-weight: 700; line-height: 18px; }
.user { gap: 4px; margin-left: 10px; }
.user .caret { margin-left: 2px; }

.rail { grid-row: 2 / -1; background: #fafafa; border: solid #ccc; border-width: 1px 1px 0 0; display: flex; flex-direction: column; align-items: center; }
.rail button { width: 40px; height: 35px; }
.rail svg { width: 20px; height: 20px; }
.rail .find { margin-top: auto; height: 30px; }

.toolbar { display: flex; align-items: center; white-space: nowrap; }
.tool { width: 34px; height: 34px; flex: none; }
.tool svg { width: 20px; height: 20px; }
.redo svg { transform: scaleX(-1); }
.more { width: 18px; height: 34px; flex: none; }
.more svg { width: 12px; height: 12px; }
.sep { width: 2px; height: 26px; background: #d0d0d0; margin: 0 1px; flex: none; }
.sketch { width: 86px; gap: 3px; flex: none; }
.sketch svg { width: 20px; height: 20px; }
.st { border: 1px solid #888; border-radius: 3px; width: 20px; height: 20px; font-size: 11px; line-height: 18px; text-align: center; }
.search { border: 0; border-radius: 4px; background: #ededed; height: 32px; width: 160px; margin-left: 11px; padding: 0 9px; text-align: left; display: flex; align-items: center; }
kbd { font: 11px Roboto, "DejaVu Sans", sans-serif; border: 1px solid #aaa; border-bottom-width: 2px; border-radius: 2px; height: 19px; line-height: 17px; padding: 0 4px; margin-top: 2px; }
.search kbd:first-of-type { margin-left: auto; padding: 0 2px; }

.work { display: flex; min-height: 0; }
.panel { width: 206px; flex: none; border: 1px solid #ccc; border-left: 0; display: flex; flex-direction: column; font-size: 13px; }
.panel-head { height: 30px; display: flex; align-items: center; padding-left: 4px; }
h2 { font-size: 13px; font-weight: 500; margin: 0; width: 131px; }
.panel-head button { width: 20px; margin-right: 10px; }
.panel-head svg { width: 20px; height: 20px; }
.filter { display: flex; align-items: center; gap: 12px; padding: 0 8px 0 9px; }
.filter svg { flex: none; }
input { width: 158px; height: 30px; border: 1px solid #999; border-radius: 3px; padding: 0 6px; font: 13px Roboto, sans-serif; min-width: 0; flex: 1; }
input::placeholder { color: #666; font-style: italic; opacity: 1; }
.tree { height: 455px; display: flex; border-bottom: 1px solid #ccc; margin-right: 5px; overflow: hidden; flex: none; }
.tree-list { flex: 1; }
.row { height: 26px; display: flex; align-items: center; gap: 5px; padding-left: 5px; white-space: nowrap; }
.row svg { width: 16px; height: 16px; flex: none; }
.head { gap: 6px; padding-left: 4px; }
.head svg { width: 13px; height: 14px; color: #555; }
.muted { color: #999; --line: #a8c4ee; }
.geometry { border-left: 1px solid #ccc; margin-left: 9px; }
.geometry .row { padding-left: 14px; }
.var { width: 16px; font: 14px "Liberation Sans", sans-serif; display: flex; justify-content: center; }
.var em { font: italic 700 18px/14px "Liberation Serif", serif; }
.part { padding-left: 23px; }
.scroll { width: 15px; background: #fafafa; display: flex; flex-direction: column; align-items: center; padding: 10px 0; }
.up { border: 5px solid transparent; border-bottom-color: #777; border-top: 0; }
.down { border: 5px solid transparent; border-top-color: #777; border-bottom: 0; margin-top: auto; }
.thumb { width: 9px; height: 216px; border-radius: 5px; background: #888; margin-top: 8px; }

.canvas { position: relative; flex: 1; min-width: 0; }
.model { width: 100%; height: 100%; display: block; }
.solid { stroke: #10181d; stroke-width: 3; stroke-linejoin: round; }
.cube { position: absolute; right: 10px; top: 11px; width: 160px; height: 160px; }
.axis { font: 500 34px Roboto, sans-serif; }
.face { font: 29px "Noto Sans", sans-serif; fill: #222; }
.face .right { font-size: 25px; }
.shading { position: absolute; right: 20px; top: 146px; gap: 8px; }
.shading svg { width: 19px; height: 19px; }
.flyout { position: absolute; left: -1px; top: 372px; width: 33px; height: 34px; border: 1px solid #aaa; border-left: 0; background: #fff; }
.side-tools { position: absolute; right: 0; top: 322px; width: 32px; border: solid #999; border-width: 1px 0 0 1px; }
.side-tools button { width: 100%; height: 33px; border-bottom: 1px solid #999; }
.side-tools svg { width: 20px; height: 20px; }
.measure { position: absolute; right: 11px; bottom: 5px; display: flex; gap: 17px; }
.measure svg { width: 18px; height: 18px; }

.tabs { background: #d6d6d6; display: flex; min-width: 0; }
.add { width: 34px; flex: none; padding-bottom: 2px; }
.strip { position: relative; flex: 1; min-width: 0; display: flex; gap: 2px; overflow: hidden; }
.strip::before, .strip::after { content: ""; position: absolute; top: 0; bottom: 3px; width: 18px; background: linear-gradient(90deg, #999, transparent); }
.strip::before { left: 0; }
.strip::after { right: 0; transform: scaleX(-1); }
.tab { height: 28px; flex: none; border: 0; border-radius: 0 0 6px 6px; background: #eaeaea; color: #666; font-size: 14px; padding: 0 10px 0 12px; display: flex; align-items: center; gap: 3px; box-shadow: 0 1px 2px #aaa; }
.tab svg { width: 18px; height: 20px; }
.tab.first { padding-left: 0; }
.tab.active { background: #fff; color: #333; border-bottom: 2px solid #1651b0; padding-top: 1px; }
.nav { width: 24px; flex: none; }
.nav svg { width: 10px; height: 16px; }
</style>
